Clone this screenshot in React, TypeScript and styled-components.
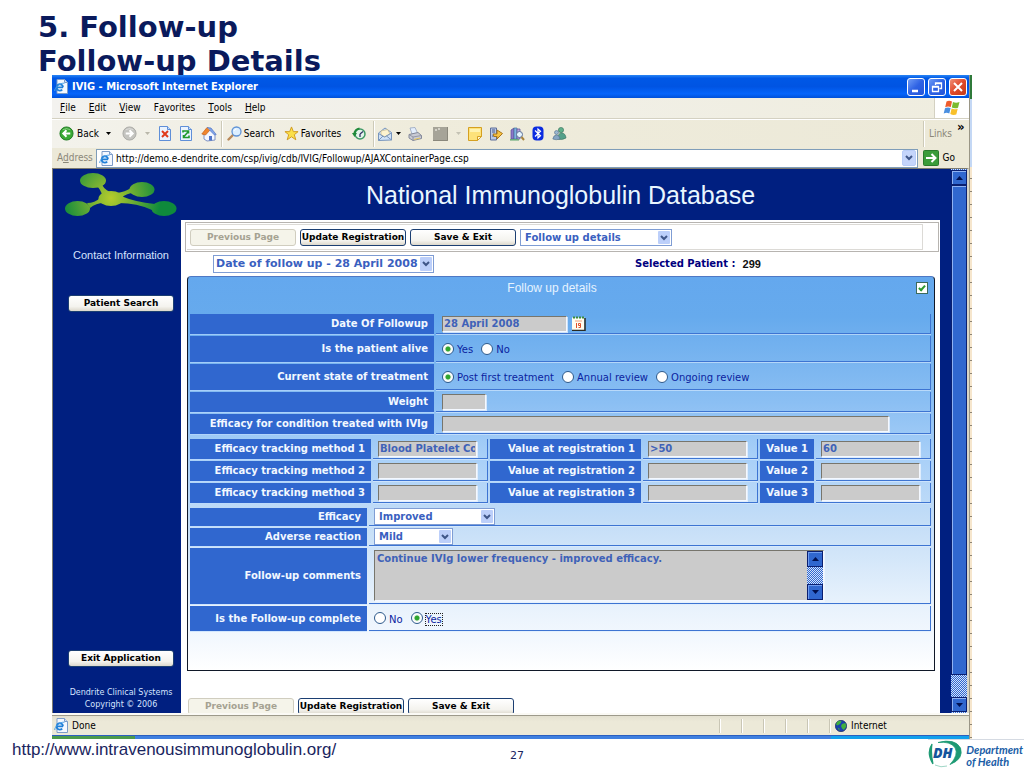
import React from "react";
import styled, { createGlobalStyle } from "styled-components";

const NAVY = "#001f80";
const ROW = "#3067cf";
const UI = '"DejaVu Sans Condensed", "DejaVu Sans", sans-serif';
const VERD = '"DejaVu Sans", Verdana, sans-serif';
const ARIAL = '"Liberation Sans", Arial, sans-serif';
const CHECKER = "repeating-conic-gradient(#3067cf 0% 25%, #d4e2fa 0% 50%) 0 0 / 2px 2px";

const GlobalStyle = createGlobalStyle`
  *, *::before, *::after { box-sizing: border-box; }
  body { margin: 0; background: #fff; }
  button, input, select, textarea { font: inherit; margin: 0; border-radius: 0; }
  svg { display: block; flex: none; }
`;

const Slide = styled.div`
  min-height: 100vh;
  display: flex;
  flex-direction: column;
`;
const SlideTitle = styled.h1`
  margin: 0 0 -3px;
  padding: 10px 0 0 38px;
  font: bold 29px/34px ${VERD};
  color: #0a1a5c;
`;

/* Browser window */
const WindowFrame = styled.div`
  position: relative;
  flex: 1;
  margin: 0 52px;
  display: flex;
`;
const Win = styled.div`
  flex: 1;
  min-width: 0;
  display: flex;
  flex-direction: column;
  background: #ece9d8;
  font: 10px/14px ${UI};
  color: #000;
`;
const BehindStrip = styled.div`
  width: 3px;
  border-left: 1px solid #9a9686;
  background:
    linear-gradient(#2f7a3a 0 24px, #c4d8f5 24px 92px, transparent 92px),
    repeating-linear-gradient(#f6e6cd 0 12px, #8c8474 12px 13px);
`;
const TitleBar = styled.div`
  height: 23px;
  display: flex;
  align-items: center;
  gap: 4px;
  padding: 0 2px;
  background: linear-gradient(#2a86f5 0, #0058e6 14%, #0054e3 50%, #0565fb 82%, #0050d8 100%);
  font: bold 11px/14px ${UI};
  color: #fff;
`;
const Grow = styled.span`
  flex: 1;
`;
const CaptionButton = styled.button<{ $close?: boolean }>`
  width: 18px;
  height: 18px;
  padding: 0;
  margin-left: -1px;
  display: grid;
  place-items: center;
  border: 1px solid #fff;
  border-radius: 3px;
  background: ${(p) => (p.$close ? "linear-gradient(135deg,#f09078,#e0492a 50%,#c43a16)" : "linear-gradient(135deg,#6f9cf6,#2e62e4 50%,#2355d8)")};
`;
const MenuBar = styled.div`
  height: 21px;
  display: flex;
  align-items: center;
  padding-left: 8px;
  gap: 13px;
  background: linear-gradient(90deg, #f3f2ef, #efeddf);
  border-bottom: 1px solid #d4d1c2;
`;
const PlainButton = styled.button<{ $w?: number; $gap?: number; $left?: number }>`
  width: ${(p) => (p.$w ? `${p.$w}px` : "auto")};
  margin-left: ${(p) => p.$left || 0}px;
  flex: none;
  padding: 0;
  border: 0;
  background: none;
  color: inherit;
  display: inline-flex;
  align-items: center;
  justify-content: center;
  gap: ${(p) => p.$gap || 0}px;
  white-space: pre;
`;
const FlagBox = styled.div`
  width: 35px;
  height: 20px;
  display: grid;
  place-items: center;
  background: #fff;
  border-left: 1px solid #d4d1c2;
`;
const ToolBar = styled.div`
  height: 29px;
  display: flex;
  align-items: center;
  padding: 0 0 1px 7px;
  background: linear-gradient(90deg, #f3f2ec, #efecdc 40%, #ece9d8);
  border-top: 1px solid #fff;
`;
const Divider = styled.span`
  width: 2px;
  height: 26px;
  flex: none;
  border-left: 1px solid #cdcab8;
  border-right: 1px solid #fff;
`;
const Links = styled.a`
  align-self: stretch;
  display: flex;
  align-items: center;
  padding: 0 5px 0 4px;
  color: #8a8778;
  text-decoration: none;
`;
const Chevron = styled.span`
  align-self: flex-start;
  width: 12px;
  font: bold 13px/13px ${UI};
`;
const AddressBar = styled.div`
  height: 20px;
  display: flex;
  align-items: center;
  padding: 0 14px 0 5px;
  gap: 5px;
`;
const AddressLabel = styled.label`
  width: 34px;
  color: #8a8778;
`;
const AddressField = styled.div`
  flex: 1;
  height: 19px;
  display: flex;
  align-items: center;
  gap: 3px;
  padding: 0 1px 0 2px;
  background: #fff;
  border: 1px solid #7f9db9;
`;
const AddressInput = styled.input`
  flex: 1;
  min-width: 0;
  height: 16px;
  padding: 0;
  border: 0;
  background: none;
  outline: none;
  color: #000;
`;
const DropButton = styled.button`
  width: 14px;
  height: 16px;
  padding: 0;
  display: grid;
  place-items: center;
  border: 1px solid #b9cdf8;
  border-radius: 2px;
  background: #c5d5fb;
`;
const StatusBar = styled.div`
  height: 20px;
  display: flex;
  align-items: center;
  gap: 4px;
  padding-left: 2px;
  border-top: 1px solid #9d9a8b;
  background: linear-gradient(#e3e0d0, #ece9d8 30%);
`;
const StatusCell = styled.div<{ $w: number }>`
  width: ${(p) => p.$w}px;
  height: 14px;
  display: flex;
  align-items: center;
  gap: 4px;
  padding-left: 5px;
  margin-left: -4px;
  border-left: 1px solid #c9c6b5;
  box-shadow: inset 1px 0 #fff;
`;
const StatusTop = styled.div`
  height: 2px;
  background: #fbfaf5;
`;
const TaskStrip = styled.div`
  height: 4px;
  border-top: 1px solid #2a5fc0;
  background: linear-gradient(90deg, #4b9a4b 0 9%, #3f80e0 9% 85%, #12a0ec 85%);
`;

/* Application page inside the browser */
const Viewport = styled.div`
  flex: 1;
  display: flex;
  border: solid #7d7b70;
  border-width: 1px 2px 0 1px;
  border-right-color: #d8d5c6;
  background: ${NAVY};
`;
const AppPage = styled.div`
  flex: 1;
  min-width: 0;
  display: flex;
  flex-direction: column;
`;
const AppHeader = styled.header`
  height: 51px;
  display: flex;
  padding-right: 11px;
`;
const LogoBox = styled.div`
  width: 128px;
  padding: 3px 0 0 12px;
`;
const AppTitle = styled.h2`
  flex: 1;
  margin: 0;
  text-align: center;
  font: 25px/53px ${ARIAL};
  color: #e9f6ff;
`;
const AppBody = styled.div`
  flex: 1;
  display: flex;
  padding-right: 11px;
`;
const Sidebar = styled.nav`
  width: 128px;
  display: flex;
  flex-direction: column;
  align-items: center;
  padding: 28px 0 2px 8px;
`;
const ContactLink = styled.a`
  font: 11px/14px ${ARIAL};
  color: #d5e3ff;
  text-decoration: none;
  margin-bottom: 33px;
`;
const Copyright = styled.p`
  margin: 20px 0 0;
  text-align: center;
  white-space: nowrap;
  font: 8px/12px ${VERD};
  color: #d5e3ff;
`;
const AppButton = styled.button`
  width: 106px;
  height: 17px;
  flex: none;
  padding: 0;
  border: 1px solid #1c3f72;
  border-radius: 3px;
  background: linear-gradient(#ffffff, #f4f3ee 70%, #dcd8cc);
  font: bold 9px/13px ${VERD};
  white-space: nowrap;
  color: #000;
  &:disabled {
    border-color: #d0cdbf;
    background: #f5f4ea;
    color: #a5a292;
  }
`;
const Main = styled.main`
  flex: 1;
  min-width: 0;
  display: flex;
  flex-direction: column;
  background: #fff;
`;
const ActionFrame = styled.div`
  margin: 2px 1px 0 4px;
  height: 30px;
  padding: 1px 15px 1px 1px;
  border: 1px solid #b7b4b0;
`;
const Actions = styled.div`
  height: 26px;
  display: flex;
  align-items: center;
  gap: 4px;
  padding: 1px 3px 0 3px;
  border: 1px solid #dcdad6;
  border-left: 0;
`;
const FooterActions = styled.div`
  height: 15px;
  margin-top: 27px;
  padding-left: 7px;
  display: flex;
  gap: 4px;
  overflow: hidden;
`;
const PatientRow = styled.div`
  height: 24px;
  display: flex;
  align-items: center;
  padding-left: 32px;
  gap: 201px;
`;
const PatientText = styled.p`
  margin: 0;
  display: flex;
  gap: 7px;
  font: bold 10px/14px ${VERD};
  color: #00007e;
`;
const PatientId = styled.b`
  font: bold 11px/14px ${ARIAL};
  color: #111;
`;
const SelectWrap = styled.span<{ $w: number; $big?: boolean }>`
  position: relative;
  width: ${(p) => p.$w}px;
  height: ${(p) => (p.$big ? 18 : 17)}px;
  flex: none;
  display: block;
  font: bold ${(p) => (p.$big ? 11 : 10)}px/14px ${VERD};
  select {
    padding: ${(p) => (p.$big ? "0 13px 0 2px" : "0 16px 0 4px")};
  }
`;
const StyledSelect = styled.select`
  appearance: none;
  width: 100%;
  height: 100%;
  border: 1px solid #7f9dd4;
  background: #fff;
  color: #3a5fc0;
`;
const SelectArrow = styled.span`
  position: absolute;
  top: 2px;
  right: 2px;
  bottom: 2px;
  width: 12px;
  display: grid;
  place-items: center;
  border-radius: 1px;
  background: #bccffa;
  pointer-events: none;
`;

const Panel = styled.section`
  flex: 1;
  margin: 0 5px 0 6px;
  padding: 0 3px 0 2px;
  display: flex;
  flex-direction: column;
  border: 1px solid #101828;
  border-top-color: #4e78c4;
  border-radius: 4px 4px 0 0;
  background: linear-gradient(#64a8ee 0, #66aaed 10%, #8bbff3 32%, #a9d0f8 46%, #c3ddf7 62%, #e6f1fc 82%, #f3f8fe 92%, #ffffff 100%);
`;
const PanelHead = styled.div`
  height: 37px;
  display: grid;
  grid-template-columns: 1fr auto 1fr;
  align-items: start;
  padding-top: 4px;
`;
const PanelTitle = styled.h3`
  grid-column: 2;
  margin: 0 17px 0 0;
  font: 12px/15px ${ARIAL};
  color: #e6f3ff;
`;
const PanelCheck = styled.input`
  appearance: none;
  justify-self: end;
  width: 12px;
  height: 12px;
  margin: 1px 3px 0 0;
  border: 1px solid #3c6a5c;
  background: #fff;
  display: grid;
  place-items: center;
  &:checked::before {
    content: "";
    width: 4px;
    height: 7px;
    margin-top: -2px;
    border: solid #2f9a2f;
    border-width: 0 2px 2px 0;
    rotate: 42deg;
  }
`;
const Rows = styled.div<{ $label: number; $top?: number; $pad?: number }>`
  --label: ${(p) => p.$label}px;
  --pad: ${(p) => p.$pad || 5}px;
  display: flex;
  flex-direction: column;
  gap: 2px;
  margin-top: ${(p) => p.$top || 0}px;
`;
const Row = styled.div<{ $h: number }>`
  height: ${(p) => p.$h}px;
  display: grid;
  grid-template-columns: var(--label) minmax(0, 1fr);
  column-gap: 2px;
`;
const TripleRow = styled.div`
  height: 20px;
  display: grid;
  grid-template-columns: 181px minmax(0, 1fr) 151px minmax(0, 1fr) 54px minmax(0, 1fr);
  column-gap: 2px;
`;
const labelLook = `
  display: flex;
  align-items: center;
  justify-content: flex-end;
  padding-right: 6px;
  background: ${ROW};
  box-shadow: 0 1px rgba(190, 220, 255, 0.6);
  font: bold 10px/14px ${VERD};
  color: #f2f8ff;
  white-space: nowrap;
`;
const FieldLabel = styled.label`
  ${labelLook}
`;
const GroupLabel = styled.span`
  ${labelLook}
`;
const Cell = styled.div`
  display: flex;
  align-items: center;
  padding-left: var(--pad);
  gap: 7px;
  border: solid #3d74d2;
  border-width: 0 1px 1px 0;
  box-shadow: 0 1px rgba(220, 236, 255, 0.6);
  font: 10px/14px ${VERD};
  color: #0b1fa0;
`;
const sunken = `
  border: 1px solid;
  border-color: #77756c #f4f8ff #f4f8ff #77756c;
  box-shadow: 1px 1px rgba(244, 248, 255, 0.7);
  background: #cbcbcb;
  color: #3f62b8;
  outline: none;
`;
const TextField = styled.input<{ $w: number }>`
  width: 100%;
  max-width: ${(p) => p.$w}px;
  height: 16px;
  padding: 0 1px;
  ${sunken}
  font: bold 10px/14px ${VERD};
`;
const CommentBox = styled.div`
  width: 450px;
  height: 51px;
  display: flex;
  ${sunken}
`;
const Comment = styled.textarea`
  flex: 1;
  height: 49px;
  padding: 1px 2px;
  resize: none;
  overflow: hidden;
  border: 0;
  outline: none;
  background: none;
  color: inherit;
  font: bold 10px/14px ${VERD};
`;
const CommentScroll = styled.div`
  width: 16px;
  display: flex;
  flex-direction: column;
  justify-content: space-between;
  background: ${CHECKER};
`;
const CommentScrollButton = styled.button`
  height: 16px;
  padding: 0;
  display: grid;
  place-items: center;
  border: 1px solid #0a1f70;
  background: #3067cf;
  box-shadow: inset 1px 1px #6f9cf0;
`;
const RadioLabel = styled.label<{ $focus?: boolean }>`
  display: inline-flex;
  align-items: center;
  gap: 2px;
  white-space: nowrap;
  span {
    padding: 0 1px;
    line-height: 13px;
    margin-top: 2px;
    outline: ${(p) => (p.$focus ? "1px dotted #222" : "none")};
    outline-offset: -1px;
  }
`;
const Radio = styled.input`
  appearance: none;
  width: 12px;
  height: 12px;
  border: 1px solid #2d5a8c;
  border-radius: 50%;
  background: #fff;
  &:checked {
    background: radial-gradient(circle, #2fa52f 0 2px, #e8f4e8 3px, #fff 4px);
  }
`;
const IconButton = styled.button`
  padding: 0;
  margin-left: -2px;
  border: 0;
  background: none;
`;

const ScrollBar = styled.div`
  width: 16px;
  display: flex;
  flex-direction: column;
  padding: 1px 0;
  background: ${CHECKER};
`;
const ScrollButton = styled.button`
  height: 15px;
  padding: 0;
  display: grid;
  place-items: center;
  border: 1px solid #0a1f70;
  background: #3067cf;
  box-shadow: inset 1px 1px #8fb2f4;
`;
const ScrollThumb = styled.div`
  flex: 1;
  margin-bottom: 22px;
  border: 1px solid #0a1f70;
  background: #3067cf;
  box-shadow: inset 1px 1px #8fb2f4;
`;

/* Slide footer */
const SlideFooter = styled.footer`
  height: 29px;
  display: grid;
  grid-template-columns: 1fr auto 1fr;
  background: #fff;
`;
const SiteLink = styled.a`
  padding-left: 12px;
  font: 17px/22px ${ARIAL};
  color: #1a2560;
  text-decoration: none;
`;
const PageNumber = styled.span`
  padding: 10px 0 0 10px;
  font: 11px/14px ${VERD};
  color: #1a2560;
`;
const DeptLogo = styled.div`
  justify-self: end;
  display: flex;
  gap: 3px;
  border-top: 1px solid #d5dae2;
`;
const DeptName = styled.div`
  display: flex;
  flex-direction: column;
  justify-content: flex-end;
  padding-right: 1px;
  font: italic bold 11px/12px Lato, sans-serif;
  color: #1a5da6;
`;

const Tri = ({ up, color = "#001050" }: { up?: boolean; color?: string }) => (
  <svg width="7" height="4" viewBox="0 0 7 4">
    <path d={up ? "M0 4L3.5 0L7 4Z" : "M0 0L3.5 4L7 0Z"} fill={color} />
  </svg>
);
const SmallTri = ({ color = "#000" }: { color?: string }) => (
  <svg width="5" height="3" viewBox="0 0 5 3">
    <path d="M0 0H5L2.5 3Z" fill={color} />
  </svg>
);
const Caret = () => (
  <svg width="8" height="6" viewBox="0 0 8 6" fill="none">
    <path d="M1 1L4 4L7 1" stroke="#3f5688" strokeWidth="2" />
  </svg>
);
const IEIcon = () => (
  <svg width="14" height="15" viewBox="0 0 14 15">
    <path d="M3 .5H10.500L13.500 3.500V14.500H3Z" fill="#f4f8ff" stroke="#7d9cc8" />
    <path d="M10.500 .5V3.500H13.500" fill="#cfe0f6" stroke="#7d9cc8" />
    <path d="M9 8.300H3.200M9 8.300A3.200 3.200 0 1 0 8.200 10.600" fill="none" stroke="#1f7fd8" strokeWidth="1.800" />
    <path d="M.8 12C0 9.500 6 3.500 10.500 4.200" fill="none" stroke="#4aa0e8" />
  </svg>
);
const CirclePointer = ({ right }: { right?: boolean }) => (
  <svg width="15" height="15" viewBox="0 0 16 16">
    <circle cx="8" cy="8" r="7" fill={right ? "#c4c4c0" : "#3aa935"} stroke={right ? "#a9a9a4" : "#1f7a22"} />
    <path d="M4 4Q8 1.500 12 4" stroke="#fff" opacity=".4" fill="none" />
    <path d={right ? "M4 8H11M8 4.500L11.500 8L8 11.500" : "M12 8H5M8 4.500L4.500 8L8 11.500"} fill="none" stroke="#fff" strokeWidth="2" />
  </svg>
);
const Sheet = ({ children }: { children: React.ReactNode }) => (
  <svg width="14" height="15" viewBox="0 0 14 15">
    <path d="M1.500 .5H9.500L12.500 3.500V14.500H1.500Z" fill="#eaf3ff" stroke="#5f8fd8" />
    <path d="M9.500 .5V3.500H12.500" fill="#c6dcf8" stroke="#5f8fd8" />
    {children}
  </svg>
);
const HomeIcon = () => (
  <svg width="16" height="16" viewBox="0 0 16 16">
    <path d="M3 8L9 3L14 8V14L6 15L3 13Z" fill="#f4f7ff" stroke="#7d92c4" />
    <path d="M.8 8L6 1.500L9.500 3.500L4.500 9Z" fill="#f0862c" stroke="#c4601a" strokeWidth=".7" />
    <path d="M6 1.500L10 2L15.200 8.500L13.500 9L8.500 4" fill="#7fa4ea" stroke="#5576c0" strokeWidth=".7" />
    <path d="M8 10H11V14.500H8Z" fill="#4f74c8" />
  </svg>
);
const SearchIcon = () => (
  <svg width="15" height="15" viewBox="0 0 15 15">
    <path d="M6.500 8.500L1.500 13.500" stroke="#b98a5a" strokeWidth="2.400" strokeLinecap="round" />
    <circle cx="9.500" cy="5.500" r="4.500" fill="#dcefff" stroke="#5f93d6" strokeWidth="1.300" />
    <path d="M7 5Q7.500 3 9.500 3" stroke="#fff" fill="none" />
  </svg>
);
const StarIcon = () => (
  <svg width="15" height="15" viewBox="0 0 16 16">
    <path d="M8 1L10 6H15L11 9.300L12.600 14.700L8 11.500L3.400 14.700L5 9.300L1 6H6Z" fill="#fbe04a" stroke="#d09a1c" />
  </svg>
);
const HistoryIcon = () => (
  <svg width="14" height="14" viewBox="0 0 14 14">
    <circle cx="8" cy="7" r="5" fill="#e3f4ea" stroke="#3f9a66" strokeWidth="1.500" />
    <path d="M0 6H5L2.500 10Z" fill="#1f8a3a" />
    <path d="M2.500 7A5.500 5.500 0 0 1 7.500 1.500" fill="none" stroke="#1f8a3a" strokeWidth="2" />
    <path d="M8 7V10M8 7L11 4.500" stroke="#336" strokeWidth="1.300" />
  </svg>
);
const MailIcon = () => (
  <svg width="14" height="14" viewBox="0 0 14 14">
    <path d="M.5 6L7 1L13.500 5.500V13L.5 13.500Z" fill="#cfe2f8" stroke="#7895bd" />
    <path d="M3 4L9.500 2.500L12 7L7 10L3 8Z" fill="#fdf3cf" stroke="#c9b98a" strokeWidth=".7" />
    <path d="M.5 6.500L6.500 10L13.500 6M.5 13.500L5 9M13.500 13L8.500 9" fill="none" stroke="#7895bd" />
  </svg>
);
const PrintIcon = () => (
  <svg width="14" height="14" viewBox="0 0 14 14">
    <path d="M2 1L7 .5L9.500 6L4 7Z" fill="#e4eefc" stroke="#96a5bf" strokeWidth=".8" />
    <path d="M1 7.500L10 5.500L13.500 8.500V11.500L5 13.500L1 11Z" fill="#c9cbd4" stroke="#858a9a" />
    <path d="M1 7.500L5 10L13.500 8.500M5 10V13.500" fill="none" stroke="#858a9a" strokeWidth=".8" />
    <path d="M6 12.500L12 11" stroke="#e7c65a" />
  </svg>
);
const EditIcon = () => (
  <svg width="15" height="14" viewBox="0 0 15 14">
    <path d="M0 0H15V14H0Z" fill="#a6a498" />
    <path d="M2 2H4V4H2ZM5 1H7V3H5Z" fill="#d4d2c8" />
    <path d="M14.500 0V13.500H0" fill="none" stroke="#8a887c" />
  </svg>
);
const NoteIcon = () => (
  <svg width="14" height="14" viewBox="0 0 14 14">
    <path d="M.5 .5H13.500V9.500L9.500 13.500H.5Z" fill="#fde27a" stroke="#d5a021" />
    <path d="M13.500 9.500H9.500V13.500Z" fill="#fff7cf" stroke="#d5a021" />
    <path d="M2 2H12V5H2Z" fill="#fff3b0" />
  </svg>
);
const SendIcon = () => (
  <svg width="14" height="14" viewBox="0 0 14 14">
    <path d="M1.500 1H7.500V13H1.500Z" fill="#b9c8e6" stroke="#5f6f9a" />
    <path d="M3 3H6M3 5H6M3 9H6" stroke="#4a5a8a" />
    <path d="M4 7H8V3L13.500 6.500L8 12V9.500H5Z" fill="#f7c243" stroke="#a8741a" />
  </svg>
);
const ResearchIcon = () => (
  <svg width="15" height="14" viewBox="0 0 15 14">
    <path d="M1 3L4 1V12H1Z" fill="#8c76c8" stroke="#5a4a96" strokeWidth=".7" />
    <path d="M4 1H7V12H4Z" fill="#7fb2e0" stroke="#46749c" strokeWidth=".7" />
    <path d="M7 2H10V12H7Z" fill="#b9a7e0" stroke="#5a4a96" strokeWidth=".7" />
    <circle cx="9.500" cy="7.500" r="3" fill="#e4f4ff" stroke="#5c6f94" />
    <path d="M11.500 10L14 13" stroke="#a9853c" strokeWidth="2" />
    <path d="M0 12.800H9" stroke="#6a7" strokeWidth="1.500" />
  </svg>
);
const BluetoothIcon = () => (
  <svg width="12" height="15" viewBox="0 0 12 15">
    <rect x=".5" y=".5" width="11" height="14" rx="4" fill="#0a2be0" />
    <path d="M3 4.500L8.500 9.800L6 12V3L8.500 5.200L3 10.500" fill="none" stroke="#fff" strokeWidth="1.200" />
  </svg>
);
const MessengerIcon = () => (
  <svg width="15" height="14" viewBox="0 0 15 14">
    <circle cx="9" cy="3" r="2.600" fill="#5faf8a" stroke="#35705c" strokeWidth=".6" />
    <path d="M5.500 12Q6 6 9.500 6Q13.500 6 14 11Q10 13.500 5.500 12Z" fill="#54a089" stroke="#35705c" strokeWidth=".6" />
    <circle cx="4.500" cy="5.500" r="2" fill="#9ab6cf" stroke="#566f8a" strokeWidth=".6" />
    <path d="M.8 12Q1.500 8 4.500 8Q7.500 8 8 12Q4 13.500 .8 12Z" fill="#86a6c4" stroke="#566f8a" strokeWidth=".6" />
  </svg>
);
const WindowsFlag = () => (
  <svg width="18" height="16" viewBox="0 0 18 16">
    <path d="M3.500 1.500Q6 0 9 1.500L7.800 7Q5 5.800 2.200 7.200Z" fill="#ee5b2b" />
    <path d="M10 2Q13 3.500 16.500 2L15 7.700Q12 9 8.800 7.500Z" fill="#7cbb2f" />
    <path d="M2 8.200Q4.800 6.800 7.600 8L6.300 13.500Q3.500 12.200 .7 13.600Z" fill="#4a8fe0" />
    <path d="M8.600 8.500Q11.500 10 14.700 8.700L13.300 14.500Q10.300 15.700 7.300 14Z" fill="#f8c02a" />
  </svg>
);
const GoIcon = () => (
  <svg width="16" height="16" viewBox="0 0 16 16">
    <rect x=".5" y=".5" width="15" height="15" rx="1" fill="#3a9c3a" stroke="#2a7a2c" />
    <path d="M3 8H12M8.500 4L12.500 8L8.500 12" fill="none" stroke="#fff" strokeWidth="2" />
  </svg>
);
const GlobeIcon = () => (
  <svg width="12" height="12" viewBox="0 0 12 12">
    <circle cx="6" cy="6" r="5.700" fill="#1a3fae" stroke="#0a1a50" strokeWidth=".6" />
    <path d="M2 2Q5 0 6.500 1.500L5 4L2.500 5.500L1 4.500ZM7 4L10.500 3L11.300 6.500L9 10L7 8.500L6 6Z" fill="#3fae3f" />
    <path d="M2.500 7.500L4.500 8.500L4.500 11Z" fill="#3fae3f" />
  </svg>
);
const CalendarIcon = () => (
  <svg width="14" height="15" viewBox="0 0 14 15">
    <path d="M0 1.500H12.500V14H0Z" fill="#fffdf0" />
    <path d="M13 2V14.500H0" fill="none" stroke="#2a2a20" strokeWidth="1.500" />
    <path d="M1 1.500H12.500" stroke="#3c8a3c" strokeWidth="2" strokeDasharray="2 1" />
    <path d="M3 5H10" stroke="#f0a080" />
    <path d="M4.500 7V12M8.500 9.500H6.500V7.500H8.500V11.500H6.500" fill="none" stroke="#e0502a" />
  </svg>
);
const DendriteLogo = () => (
  <svg width="112" height="46" viewBox="0 0 112 46">
    <defs>
      <radialGradient id="dl" gradientUnits="userSpaceOnUse" cx="46" cy="26" r="62">
        <stop offset="0" stopColor="#b4cc2c" />
        <stop offset=".35" stopColor="#6fae34" />
        <stop offset=".8" stopColor="#0f8a3c" />
      </radialGradient>
    </defs>
    <g fill="url(#dl)" stroke="none">
      <ellipse cx="28" cy="8.500" rx="13" ry="7.500" />
      <ellipse cx="77" cy="17.500" rx="12.500" ry="7.500" />
      <ellipse cx="12.500" cy="36.500" rx="12.500" ry="7.500" />
      <ellipse cx="99" cy="36.500" rx="12.500" ry="7.500" />
      <ellipse cx="46" cy="26.500" rx="12.500" ry="7.500" />
      <path d="M31 13L37 11.500Q38 17 45 20L37 23Q36 18 31 13ZM52 21Q60 20 66 16L69 21Q62 21 56 26ZM22 31Q30 31 35 26L39 31Q31 31 25 36ZM56 24Q70 30 90 32L87 38Q72 31 54 31Z" />
    </g>
  </svg>
);
const DHLogo = () => (
  <svg width="35" height="28" viewBox="0 0 35 28">
    <path d="M4 4Q-2 13 5 24Q2.500 13 4 4Z" fill="#1d9a74" stroke="#1d9a74" strokeWidth="1.200" />
    <path d="M10 2.500Q27 -2 32.500 8Q36 19 22 24.500Q31 15 27 7.500Q22 1 10 2.500Z" fill="#1d9a74" stroke="#1d9a74" strokeWidth=".8" />
    <path d="M7 25Q13 28 19 26" fill="none" stroke="#9fd6c6" />
    <text x="5" y="18" fontFamily="Open Sans, sans-serif" fontWeight="800" fontStyle="italic" fontSize="14" fill="#14559c">DH</text>
  </svg>
);

function Select({ w, value, label, big }: { w: number; value: string; label: string; big?: boolean }) {
  return (
    <SelectWrap $w={w} $big={big}>
      <StyledSelect aria-label={label} defaultValue={value}>
        <option>{value}</option>
      </StyledSelect>
      <SelectArrow><Caret /></SelectArrow>
    </SelectWrap>
  );
}

function RadioGroup({ name, labelId, options, selected, focus }: { name: string; labelId: string; options: string[]; selected: string; focus?: string }) {
  return (
    <Cell role="radiogroup" aria-labelledby={labelId}>
      {options.map((o) => (
        <RadioLabel key={o} $focus={o === focus}>
          <Radio type="radio" name={name} defaultChecked={o === selected} />
          <span>{o}</span>
        </RadioLabel>
      ))}
    </Cell>
  );
}

const ActionButtons = () => (
  <>
    <AppButton disabled>Previous Page</AppButton>
    <AppButton>Update Registration</AppButton>
    <AppButton>Save &amp; Exit</AppButton>
  </>
);

const menus = [["", "F", "ile"], ["", "E", "dit"], ["", "V", "iew"], ["F", "a", "vorites"], ["", "T", "ools"], ["", "H", "elp"]];
const tracking = [
  { n: 1, method: "Blood Platelet Count", reg: ">50", value: "60" },
  { n: 2, method: "", reg: "", value: "" },
  { n: 3, method: "", reg: "", value: "" },
];

function BrowserChrome() {
  return (
    <>
      <TitleBar>
        <IEIcon />
        <span>IVIG - Microsoft Internet Explorer</span>
        <Grow />
        <CaptionButton aria-label="Minimize">
          <svg width="12" height="12"><path d="M2 10H8" stroke="#fff" strokeWidth="2.500" /></svg>
        </CaptionButton>
        <CaptionButton aria-label="Restore">
          <svg width="12" height="12" fill="none" stroke="#fff"><path d="M4.500 4V2H10.500V7.500H8.500M4.500 2.500H10.500M1.500 5.500H7.500V10.500H1.500ZM1.500 6H7.500" strokeWidth="1.300" /></svg>
        </CaptionButton>
        <CaptionButton aria-label="Close" $close>
          <svg width="12" height="12"><path d="M2 2L10 10M10 2L2 10" stroke="#fff" strokeWidth="2" /></svg>
        </CaptionButton>
      </TitleBar>
      <MenuBar>
        {menus.map(([a, b, c]) => (
          <PlainButton key={b}>{a}<u>{b}</u>{c}</PlainButton>
        ))}
        <Grow />
        <FlagBox><WindowsFlag /></FlagBox>
      </MenuBar>
      <ToolBar>
        <PlainButton $gap={3}><CirclePointer />Back</PlainButton>
        <PlainButton $w={20} aria-label="Back history"><SmallTri /></PlainButton>
        <PlainButton $w={22} aria-label="Forward"><CirclePointer right /></PlainButton>
        <PlainButton $w={14} aria-label="Forward history"><SmallTri color="#b9b7aa" /></PlainButton>
        <PlainButton $w={20} aria-label="Stop">
          <Sheet><path d="M4 5L10 11M10 5L4 11" stroke="#e03a1c" strokeWidth="2" /></Sheet>
        </PlainButton>
        <PlainButton $w={22} aria-label="Refresh">
          <Sheet><path d="M4 6.500V5H9.500V7.500M10 9.500V11.500H4.500V9M4.500 11L9 6" fill="none" stroke="#1f9a2c" strokeWidth="1.600" /></Sheet>
        </PlainButton>
        <PlainButton $w={24} aria-label="Home"><HomeIcon /></PlainButton>
        <Divider />
        <PlainButton $gap={2} $left={4}><SearchIcon />Search</PlainButton>
        <PlainButton $gap={2} $left={9}><StarIcon />Favorites</PlainButton>
        <PlainButton $w={28} $left={4} aria-label="History"><HistoryIcon /></PlainButton>
        <Divider />
        <PlainButton $w={20} aria-label="Mail"><MailIcon /></PlainButton>
        <PlainButton $w={6} aria-label="Mail options"><SmallTri /></PlainButton>
        <PlainButton $w={28} aria-label="Print"><PrintIcon /></PlainButton>
        <PlainButton $w={22} aria-label="Edit"><EditIcon /></PlainButton>
        <PlainButton $w={14} aria-label="Edit options"><SmallTri color="#c4c2b4" /></PlainButton>
        <PlainButton $w={20} aria-label="Discuss"><NoteIcon /></PlainButton>
        <PlainButton $w={22} aria-label="Send to device"><SendIcon /></PlainButton>
        <PlainButton $w={20} aria-label="Research"><ResearchIcon /></PlainButton>
        <PlainButton $w={22} aria-label="Bluetooth"><BluetoothIcon /></PlainButton>
        <PlainButton $w={20} aria-label="Messenger"><MessengerIcon /></PlainButton>
        <Grow />
        <Divider />
        <Links href="#">Links</Links>
        <Chevron>»</Chevron>
      </ToolBar>
      <AddressBar>
        <AddressLabel htmlFor="address">A<u>d</u>dress</AddressLabel>
        <AddressField>
          <IEIcon />
          <AddressInput id="address" defaultValue="http://demo.e-dendrite.com/csp/ivig/cdb/IVIG/Followup/AJAXContainerPage.csp" />
          <DropButton aria-label="Show addresses"><Caret /></DropButton>
        </AddressField>
        <PlainButton $gap={4}><GoIcon />Go</PlainButton>
      </AddressBar>
    </>
  );
}

function FollowUpForm() {
  return (
    <Panel>
      <PanelHead>
        <PanelTitle>Follow up details</PanelTitle>
        <PanelCheck type="checkbox" defaultChecked aria-label="Section complete" />
      </PanelHead>
      <Rows $label={244} $pad={6}>
        <Row $h={20}>
          <FieldLabel htmlFor="date">Date Of Followup</FieldLabel>
          <Cell>
            <TextField id="date" $w={125} defaultValue="28 April 2008" />
            <IconButton aria-label="Pick a date"><CalendarIcon /></IconButton>
          </Cell>
        </Row>
        <Row $h={26}>
          <GroupLabel id="alive">Is the patient alive</GroupLabel>
          <RadioGroup name="alive" labelId="alive" options={["Yes", "No"]} selected="Yes" />
        </Row>
        <Row $h={26}>
          <GroupLabel id="state">Current state of treatment</GroupLabel>
          <RadioGroup name="state" labelId="state" options={["Post first treatment", "Annual review", "Ongoing review"]} selected="Post first treatment" />
        </Row>
        <Row $h={20}>
          <FieldLabel htmlFor="weight">Weight</FieldLabel>
          <Cell><TextField id="weight" $w={44} /></Cell>
        </Row>
        <Row $h={20}>
          <FieldLabel htmlFor="condition">Efficacy for condition treated with IVIg</FieldLabel>
          <Cell><TextField id="condition" $w={447} /></Cell>
        </Row>
      </Rows>
      <Rows $label={181} $top={5}>
        {tracking.map((t) => (
          <TripleRow key={t.n}>
            <FieldLabel htmlFor={`method${t.n}`}>Efficacy tracking method {t.n}</FieldLabel>
            <Cell><TextField id={`method${t.n}`} $w={99} defaultValue={t.method} /></Cell>
            <FieldLabel htmlFor={`reg${t.n}`}>Value at registration {t.n}</FieldLabel>
            <Cell><TextField id={`reg${t.n}`} $w={99} defaultValue={t.reg} /></Cell>
            <FieldLabel htmlFor={`value${t.n}`}>Value {t.n}</FieldLabel>
            <Cell><TextField id={`value${t.n}`} $w={99} defaultValue={t.value} /></Cell>
          </TripleRow>
        ))}
      </Rows>
      <Rows $label={177} $top={5}>
        <Row $h={18}>
          <GroupLabel>Efficacy</GroupLabel>
          <Cell><Select w={121} value="Improved" label="Efficacy" /></Cell>
        </Row>
        <Row $h={18}>
          <GroupLabel>Adverse reaction</GroupLabel>
          <Cell><Select w={79} value="Mild" label="Adverse reaction" /></Cell>
        </Row>
        <Row $h={56}>
          <FieldLabel htmlFor="comments">Follow-up comments</FieldLabel>
          <Cell>
            <CommentBox>
              <Comment id="comments" defaultValue="Continue IVIg lower frequency - improved efficacy." />
              <CommentScroll>
                <CommentScrollButton aria-label="Scroll comments up"><Tri up /></CommentScrollButton>
                <CommentScrollButton aria-label="Scroll comments down"><Tri /></CommentScrollButton>
              </CommentScroll>
            </CommentBox>
          </Cell>
        </Row>
        <Row $h={25}>
          <GroupLabel id="complete">Is the Follow-up complete</GroupLabel>
          <RadioGroup name="complete" labelId="complete" options={["No", "Yes"]} selected="Yes" focus="Yes" />
        </Row>
      </Rows>
    </Panel>
  );
}

export default function App() {
  return (
    <Slide>
      <GlobalStyle />
      <SlideTitle>5. Follow-up<br />Follow-up Details</SlideTitle>
      <WindowFrame>
        <Win>
          <BrowserChrome />
          <Viewport>
            <AppPage>
              <AppHeader>
                <LogoBox><DendriteLogo /></LogoBox>
                <AppTitle>National Immunoglobulin Database</AppTitle>
              </AppHeader>
              <AppBody>
                <Sidebar>
                  <ContactLink href="#">Contact Information</ContactLink>
                  <AppButton>Patient Search</AppButton>
                  <Grow />
                  <AppButton>Exit Application</AppButton>
                  <Copyright>Dendrite Clinical Systems<br />Copyright © 2006</Copyright>
                </Sidebar>
                <Main>
                  <ActionFrame>
                    <Actions>
                      <ActionButtons />
                      <Select w={152} value="Follow up details" label="Section" />
                    </Actions>
                  </ActionFrame>
                  <PatientRow>
                    <Select w={221} big value="Date of follow up - 28 April 2008" label="Follow up date" />
                    <PatientText>Selected Patient : <PatientId>299</PatientId></PatientText>
                  </PatientRow>
                  <FollowUpForm />
                  <FooterActions>
                    <ActionButtons />
                  </FooterActions>
                </Main>
              </AppBody>
            </AppPage>
            <ScrollBar>
              <ScrollButton aria-label="Scroll up"><Tri up /></ScrollButton>
              <ScrollThumb />
              <ScrollButton aria-label="Scroll down"><Tri /></ScrollButton>
            </ScrollBar>
          </Viewport>
          <StatusTop />
          <StatusBar>
            <IEIcon />
            <span>Done</span>
            <Grow />
            {[1, 2, 3, 4, 5].map((n) => (
              <StatusCell key={n} $w={22} />
            ))}
            <StatusCell $w={140}><GlobeIcon />Internet</StatusCell>
          </StatusBar>
          <TaskStrip />
        </Win>
        <BehindStrip />
      </WindowFrame>
      <SlideFooter>
        <SiteLink href="http://www.intravenousimmunoglobulin.org/">http://www.intravenousimmunoglobulin.org/</SiteLink>
        <PageNumber>27</PageNumber>
        <DeptLogo>
          <DHLogo />
          <DeptName>
            <span>Department</span>
            <span>of Health</span>
          </DeptName>
        </DeptLogo>
      </SlideFooter>
    </Slide>
  );
}
